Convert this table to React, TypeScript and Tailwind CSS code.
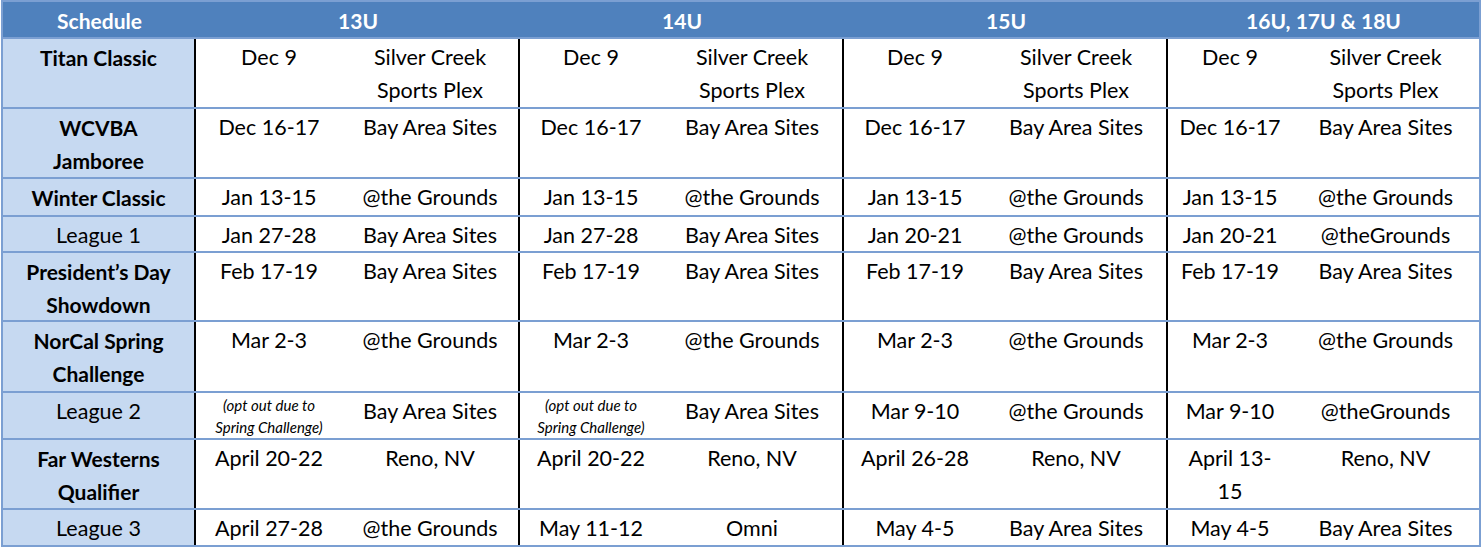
import React from 'react';

type Cell = { date: React.ReactNode; place: React.ReactNode };
type Row = { label: React.ReactNode; bold: boolean; h: string; cells: Cell[] };

const SC = (
  <>
    Silver Creek
    <br />
    Sports Plex
  </>
);

const OPT = (
  <span className="-mt-[1px] block text-[15px] leading-[22px] italic">
    (opt out due to
    <br />
    Spring Challenge)
  </span>
);

const same = (date: React.ReactNode, place: React.ReactNode): Cell[] => [
  { date, place },
  { date, place },
  { date, place },
  { date, place },
];

const rows: Row[] = [
  { label: 'Titan Classic', bold: true, h: 'h-[70px]', cells: same('Dec 9', SC) },
  {
    label: (
      <>
        WCVBA
        <br />
        Jamboree
      </>
    ),
    bold: true,
    h: 'h-[70px]',
    cells: same('Dec 16-17', 'Bay Area Sites'),
  },
  { label: 'Winter Classic', bold: true, h: 'h-[38px]', cells: same('Jan 13-15', '@the Grounds') },
  {
    label: 'League 1',
    bold: false,
    h: 'h-[36px]',
    cells: [
      { date: 'Jan 27-28', place: 'Bay Area Sites' },
      { date: 'Jan 27-28', place: 'Bay Area Sites' },
      { date: 'Jan 20-21', place: '@the Grounds' },
      { date: 'Jan 20-21', place: '@theGrounds' },
    ],
  },
  {
    label: (
      <>
        President’s Day
        <br />
        Showdown
      </>
    ),
    bold: true,
    h: 'h-[69px]',
    cells: same('Feb 17-19', 'Bay Area Sites'),
  },
  {
    label: (
      <>
        NorCal Spring
        <br />
        Challenge
      </>
    ),
    bold: true,
    h: 'h-[71px]',
    cells: same('Mar 2-3', '@the Grounds'),
  },
  {
    label: 'League 2',
    bold: false,
    h: 'h-[47px]',
    cells: [
      { date: OPT, place: 'Bay Area Sites' },
      { date: OPT, place: 'Bay Area Sites' },
      { date: 'Mar 9-10', place: '@the Grounds' },
      { date: 'Mar 9-10', place: '@theGrounds' },
    ],
  },
  {
    label: (
      <>
        Far Westerns
        <br />
        Qualifier
      </>
    ),
    bold: true,
    h: 'h-[70px]',
    cells: [
      { date: 'April 20-22', place: 'Reno, NV' },
      { date: 'April 20-22', place: 'Reno, NV' },
      { date: 'April 26-28', place: 'Reno, NV' },
      {
        date: (
          <>
            April 13-
            <br />
            15
          </>
        ),
        place: 'Reno, NV',
      },
    ],
  },
  {
    label: 'League 3',
    bold: false,
    h: 'h-[35px]',
    cells: [
      { date: 'April 27-28', place: '@the Grounds' },
      { date: 'May 11-12', place: 'Omni' },
      { date: 'May 4-5', place: 'Bay Area Sites' },
      { date: 'May 4-5', place: 'Bay Area Sites' },
    ],
  },
];

const grid = 'grid grid-rows-[minmax(0,1fr)] grid-cols-[193px_146px_178px_142px_182px_142px_182px_124px_187px]';

export default function App() {
  return (
    <div className="min-h-screen bg-white font-['Lato','Liberation_Sans',sans-serif] text-[21.5px] leading-[33px] text-black">
      <div className="ml-[1px] w-[1480px] border-2 border-[#7b9fd2]">
        {/* header */}
        <div className="grid h-[37px] grid-cols-[193px_324px_324px_324px_311px] border-b-2 border-[#7b9fd2] bg-[#4f81bd] pt-[2px] text-[21px] font-bold text-white">
          <div className="text-center">Schedule</div>
          <div className="text-center">13U</div>
          <div className="text-center">14U</div>
          <div className="text-center">15U</div>
          <div className="text-center">16U, 17U &amp; 18U</div>
        </div>

        {rows.map((row, i) => (
          <div
            key={i}
            className={`${grid} ${row.h} ${i < rows.length - 1 ? 'border-b-2 border-[#7b9fd2]' : ''}`}
          >
            <div
              className={`border-r-2 border-black bg-[#c6d9f1] pt-[2px] text-center ${row.bold ? 'text-[21px] font-bold' : ''}`}
            >
              {row.label}
            </div>
            {row.cells.map((c, j) => (
              <React.Fragment key={j}>
                <div className="pt-[2px] text-center">{c.date}</div>
                <div className={`pt-[2px] text-center ${j < 3 ? 'border-r-2 border-black' : ''}`}>{c.place}</div>
              </React.Fragment>
            ))}
          </div>
        ))}
      </div>
    </div>
  );
}
